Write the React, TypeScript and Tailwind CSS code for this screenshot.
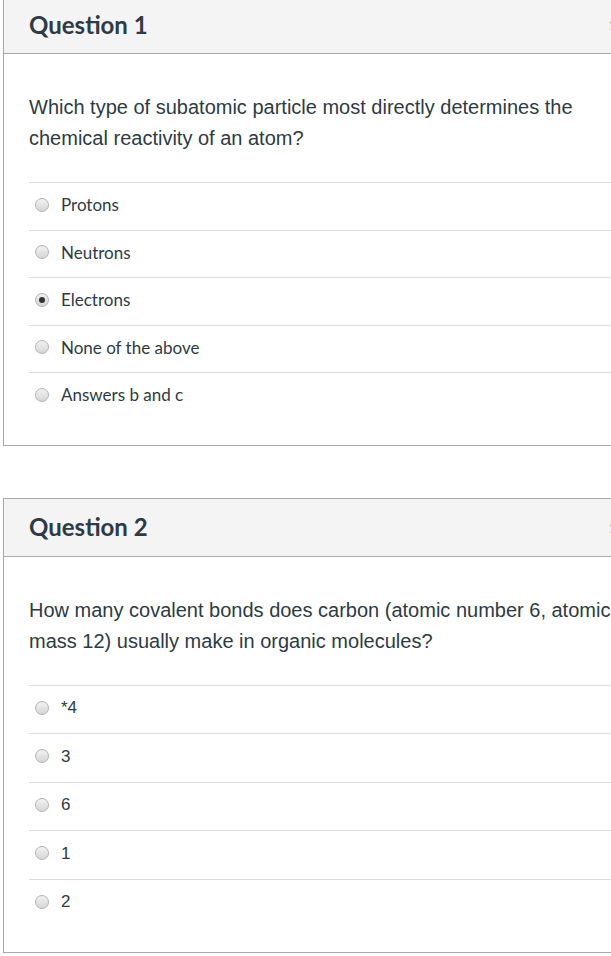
import React from "react";

const TEXT = "text-[#2d3b45]";

function Radio({ checked }: { checked?: boolean }) {
  return (
    <span className="relative inline-flex h-[14px] w-[14px] shrink-0 items-center justify-center rounded-full border border-[#b4b4b4] bg-gradient-to-b from-[#f2f2f2] to-[#d6d6d6]">
      {checked && <span className="h-[6px] w-[6px] rounded-full bg-[#333]" />}
    </span>
  );
}

type Q = {
  title: string;
  text: string[];
  answers: { label: string; checked?: boolean }[];
  answerFont: string;
  rowH: string;
  first?: boolean;
};

function Question({ q }: { q: Q }) {
  return (
    <div className={`w-[700px] border border-[#a9a9a9] bg-white ${q.first ? "-mt-[5px]" : ""}`}>
      <div className="flex h-[58px] items-center border-b border-[#a9a9a9] bg-[#f4f4f4] pl-[25px]">
        <div className={`w-[580px] font-['Lato',sans-serif] text-[24px] font-bold ${TEXT}`}>{q.title}</div>
        <div className="font-['Lato',sans-serif] text-[14px] text-[#666]">1 pts</div>
      </div>
      <div className="pl-[25px] pt-[38px] pb-[25px]">
        <div className={`w-[600px] font-['Liberation_Sans',Arial,sans-serif] text-[20px] leading-[31px] ${TEXT}`}>
          {q.text.map((t, i) => (
            <div key={i} className="whitespace-nowrap">{t}</div>
          ))}
        </div>
        <div className="mt-[28px]">
          {q.answers.map((a, i) => (
            <div
              key={i}
              className={`flex ${q.rowH} items-center border-t border-[#dcdcdc] pb-[3px] pl-[6px]`}
            >
              <Radio checked={a.checked} />
              <span className={`ml-[12px] ${q.answerFont} text-[17px] ${TEXT}`}>{a.label}</span>
            </div>
          ))}
        </div>
      </div>
    </div>
  );
}

export default function App() {
  const q1: Q = {
    title: "Question 1",
    text: [
      "Which type of subatomic particle most directly determines the",
      "chemical reactivity of an atom?",
    ],
    answers: [
      { label: "Protons" },
      { label: "Neutrons" },
      { label: "Electrons", checked: true },
      { label: "None of the above" },
      { label: "Answers b and c" },
    ],
    answerFont: "font-['Lato',sans-serif]",
    rowH: "h-[47.5px]",
    first: true,
  };
  const q2: Q = {
    title: "Question 2",
    text: [
      "How many covalent bonds does carbon (atomic number 6, atomic",
      "mass 12) usually make in organic molecules?",
    ],
    answers: [
      { label: "*4" },
      { label: "3" },
      { label: "6" },
      { label: "1" },
      { label: "2" },
    ],
    answerFont: "font-['Liberation_Sans',Arial,sans-serif]",
    rowH: "h-[48.5px]",
  };
  return (
    <div className="h-[956px] w-[611px] overflow-hidden bg-white pl-[3px]">
      <Question q={q1} />
      <div className="h-[52px]" />
      <Question q={q2} />
    </div>
  );
}
